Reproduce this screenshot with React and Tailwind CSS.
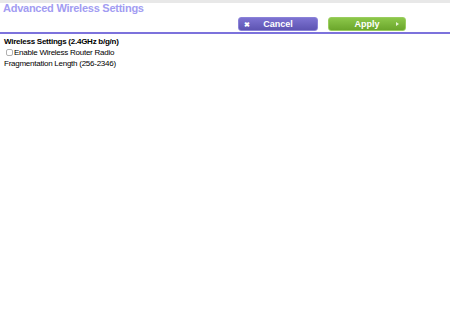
function Button({ color, icon, iconRight, children }) {
  return (
    <button className={"flex items-center h-[14px] px-[4px] rounded-[3px] border text-white text-[9px] font-bold leading-none " + color}>
      <span className="w-[7px] flex justify-center">{icon}</span>
      <span className="flex-1 text-center">{children}</span>
      <span className="w-[7px] flex justify-center">{iconRight}</span>
    </button>
  )
}

export default function App() {
  return (
    <div className="w-[450px] h-[312px] bg-white overflow-hidden" style={{ fontFamily: '"Liberation Sans", Arial, sans-serif' }}>
      <div className="h-[3px] bg-[#e8e8e8]" />
      <div className="flex items-start justify-between h-[31px] pl-[3px] pr-[44px] border-b-2 border-[#7c72dc]">
        <h1 className="text-[11px] font-bold text-[#a29cf2] leading-none tracking-[-0.25px]">Advanced Wireless Settings</h1>
        <div className="flex gap-[10px] mt-[14px]">
          <Button
            color="w-[80px] border-[#8a82d8] bg-gradient-to-b from-[#7d73d2] to-[#5e54b2]"
            icon={<span className="text-[7px]">✖</span>}
          >
            Cancel
          </Button>
          <Button
            color="w-[78px] border-[#9acd5e] bg-gradient-to-b from-[#8cc74a] to-[#6ba62b]"
            iconRight={<span className="w-0 h-0 border-y-[2.5px] border-y-transparent border-l-[3px] border-l-[#e6f3d6]" />}
          >
            Apply
          </Button>
        </div>
      </div>
      <div className="px-[4px] pt-[2px] text-[8px] text-black leading-[11px] tracking-[-0.25px]">
        <div className="font-bold">Wireless Settings (2.4GHz b/g/n)</div>
        <label className="flex items-center gap-[1px]">
          <span className="w-[7px] h-[7px] border border-[#b0b0b0] rounded-[2px] bg-white ml-[2px]" />
          <span>Enable Wireless Router Radio</span>
        </label>
        <div>Fragmentation Length (256-2346)</div>
      </div>
    </div>
  )
}
